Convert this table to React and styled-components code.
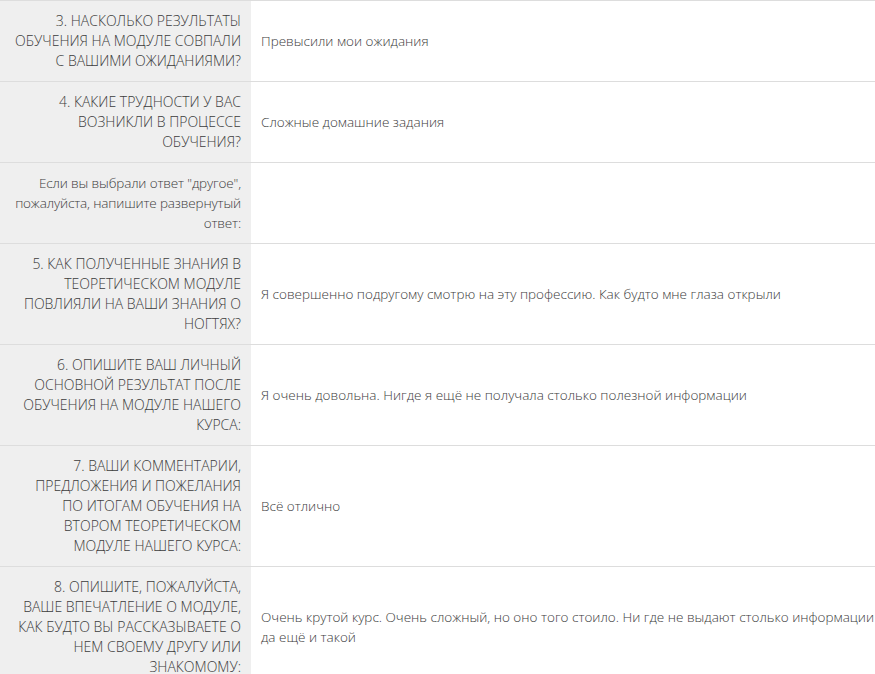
import React from "react";
import styled, { createGlobalStyle } from "styled-components";

const rows = [
  {
    q: "3. Насколько результаты обучения на модуле совпали с вашими ожиданиями?",
    a: "Превысили мои ожидания",
  },
  {
    q: "4. Какие трудности у вас возникли в процессе обучения?",
    a: "Сложные домашние задания",
  },
  {
    q: 'Если вы выбрали ответ "другое", пожалуйста, напишите развернутый ответ:',
    a: "",
    plain: true,
  },
  {
    q: "5. Как полученные знания в теоретическом модуле повлияли на ваши знания о ногтях?",
    a: "Я совершенно подругому смотрю на эту профессию. Как будто мне глаза открыли",
  },
  {
    q: "6. Опишите ваш личный основной результат после обучения на модуле нашего курса:",
    a: "Я очень довольна. Нигде я ещё не получала столько полезной информации",
  },
  {
    q: "7. Ваши комментарии, предложения и пожелания по итогам обучения на втором теоретическом модуле нашего курса:",
    a: "Всё отлично",
  },
  {
    q: "8. Опишите, пожалуйста, ваше впечатление о модуле, как будто вы рассказываете о нем своему другу или знакомому:",
    a: "Очень крутой курс. Очень сложный, но оно того стоило. Ни где не выдают столько информации да ещё и такой",
  },
];

const App = () => {
  return (
    <>
      <GlobalStyle />
      <Table>
        <tbody>
          {rows.map((row, i) => (
            <Row key={i}>
              <Question $plain={row.plain}>{row.q}</Question>
              <Answer>{row.a}</Answer>
            </Row>
          ))}
        </tbody>
      </Table>
    </>
  );
};

export default App;

const GlobalStyle = createGlobalStyle`
  body {
    margin: 0;
    background: #fff;
    font-family: "Open Sans", "Liberation Sans", sans-serif;
    color: #3c3c3c;
  }
`;

const Table = styled.table`
  width: 885px;
  border-collapse: collapse;
  table-layout: fixed;
`;

const Row = styled.tr`
  border-top: 1px solid #dddddd;
  border-bottom: 1px solid #dddddd;
`;

const Question = styled.td`
  width: 228px;
  padding: 10px 10px 10px 13px;
  background: #efefef;
  text-align: right;
  vertical-align: middle;
  font-size: ${(props) => (props.$plain ? "13.5px" : "14px")};
  letter-spacing: ${(props) => (props.$plain ? "-0.15px" : "0")};
  font-weight: 300;
  line-height: 20px;
  text-transform: ${(props) => (props.$plain ? "none" : "uppercase")};
  color: #3c3c3c;
`;

const Answer = styled.td`
  padding: 10px;
  vertical-align: middle;
  font-size: 13.5px;
  font-weight: 300;
  line-height: 20px;
  color: #3c3c3c;
`;
